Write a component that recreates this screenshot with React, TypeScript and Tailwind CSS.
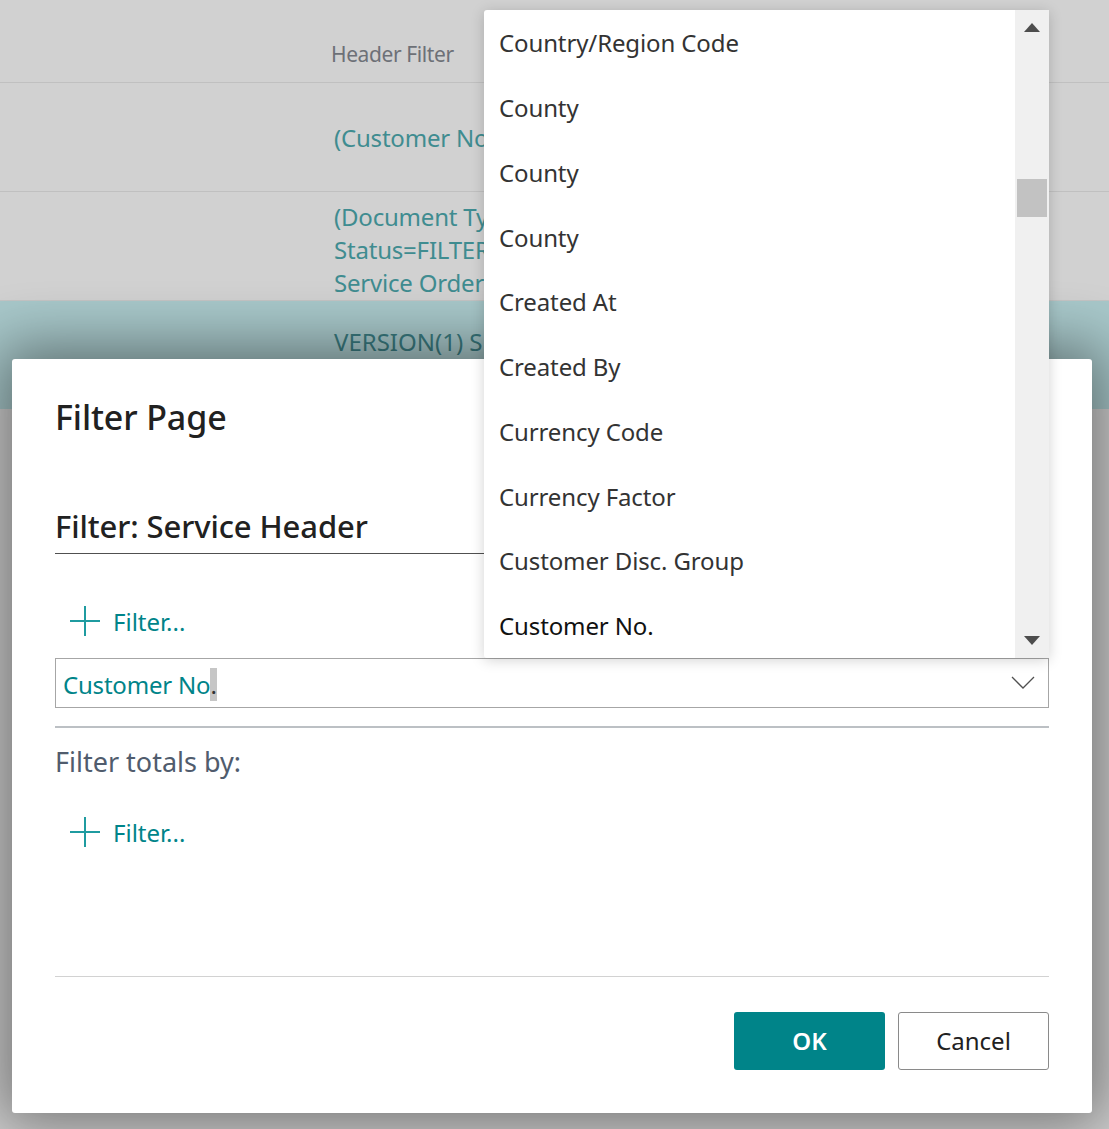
const font = "font-['Noto_Sans','Open_Sans',sans-serif]";

const fields = [
  "Country/Region Code",
  "County",
  "County",
  "County",
  "Created At",
  "Created By",
  "Currency Code",
  "Currency Factor",
  "Customer Disc. Group",
  "Customer No.",
];

const PlusFilter = () => (
  <button className="flex h-[30px] items-center gap-[13px] pl-[15px] text-[24px] text-[#008489]">
    <svg width="30" height="30" viewBox="0 0 30 30" fill="none" stroke="#1f9ba0" strokeWidth="2">
      <path d="M15 0v30M0 15h30" />
    </svg>
    <span className="pt-[2px]">Filter...</span>
  </button>
);

const App = () => {
  return (
    <div className={`relative h-[1129px] w-[1109px] overflow-hidden bg-[#d1d1d1] ${font}`}>
      {/* page behind the dialog */}
      <div className="flex h-[83px] items-end border-b border-[#c0c0c0] pb-[12px] pl-[331px] text-[21px] tracking-[-0.4px] text-[#6d7077]">
        Header Filter
      </div>
      <div className="flex h-[109px] items-center border-b border-[#c0c0c0] pl-[334px] pt-[2px] text-[24px] tracking-[-0.2px] text-[#3f8c90]">
        (Customer No.
      </div>
      <div className="flex h-[108px] flex-col justify-center pl-[334px] pt-[6px] text-[24px] leading-[33px] tracking-[-0.2px] text-[#3f8c90]">
        <span>(Document Type</span>
        <span>Status=FILTER</span>
        <span>Service Order</span>
      </div>
      <div className="h-[109px] border-t border-[#c4c4c4] bg-[#a8c8ca] pl-[334px] pt-[23px] text-[24px] text-[#397a7f]">
        VERSION(1) S
      </div>

      {/* dialog */}
      <div className="absolute left-[12px] top-[359px] flex h-[754px] w-[1080px] flex-col rounded-[3px] bg-white px-[43px] shadow-[0_0_60px_12px_rgba(0,0,0,0.45)]">
        <h1 className="mt-[36px] text-[34px] leading-[44px] font-medium tracking-[-0.12px] text-[#212121]">Filter Page</h1>
        <div className="mt-[65px] h-[50px] w-[430px] border-b border-[#505050] text-[31px] leading-[44px] font-medium tracking-[-0.1px] text-[#212121]">
          Filter: Service Header
        </div>
        <div className="mt-[52px]">
          <PlusFilter />
        </div>
        <div className="mt-[22px] flex h-[50px] w-[994px] items-center justify-between border border-[#a6a6a6] pl-[7px] pr-[13px]">
          <span className="pt-[3px] text-[24px] leading-[33px] tracking-[-0.2px] text-[#008489]">
            Customer No<span className="inline-block bg-[#c6c6c6] text-[#333]">.</span>
          </span>
          <svg width="24" height="14" viewBox="0 0 24 14" fill="none" stroke="#505050" strokeWidth="1.3">
            <path d="M1 1l11 11L23 1" />
          </svg>
        </div>
        <div className="mt-[18px] h-[2px] w-[994px] bg-[#bcc0c4]" />
        <div className="mt-[15px] text-[27px] leading-[38px] text-[#505c6d]">Filter totals by:</div>
        <div className="mt-[36px]">
          <PlusFilter />
        </div>
        <div className="mt-[129px] h-px w-[994px] bg-[#d2d2d2]" />
        <div className="mt-[35px] flex w-[994px] justify-end gap-[13px]">
          <button className="h-[58px] w-[151px] rounded-[3px] bg-[#008489] text-[24px] font-semibold text-white">OK</button>
          <button className="h-[58px] w-[151px] rounded-[3px] border border-[#8a8a8a] bg-white text-[24px] text-[#212121]">Cancel</button>
        </div>
      </div>

      {/* dropdown list */}
      <div className="absolute left-[484px] top-[10px] flex h-[648px] w-[565px] rounded-[3px] bg-white shadow-[0_2px_14px_rgba(0,0,0,0.18)]">
        <ul className="flex-1 pl-[15px] pt-[1px]">
          {fields.map((name, i) => (
            <li
              key={i}
              className={`flex h-[64.75px] items-center text-[24px] tracking-[-0.12px] ${
                name === "Customer No." ? "text-[#111]" : "text-[#333]"
              }`}
            >
              {name}
            </li>
          ))}
        </ul>
        <div className="flex w-[34px] flex-col items-center bg-[#f0f0f0]">
          <svg className="mt-[13px]" width="16" height="9" viewBox="0 0 16 9" fill="#4d4d4d">
            <path d="M8 0l8 9H0z" />
          </svg>
          <div className="mt-[147px] h-[38px] w-[30px] bg-[#c2c2c2]" />
          <div className="flex-1" />
          <svg className="mb-[13px]" width="16" height="9" viewBox="0 0 16 9" fill="#4d4d4d">
            <path d="M8 9l8-9H0z" />
          </svg>
        </div>
      </div>
    </div>
  );
};

export default App;
